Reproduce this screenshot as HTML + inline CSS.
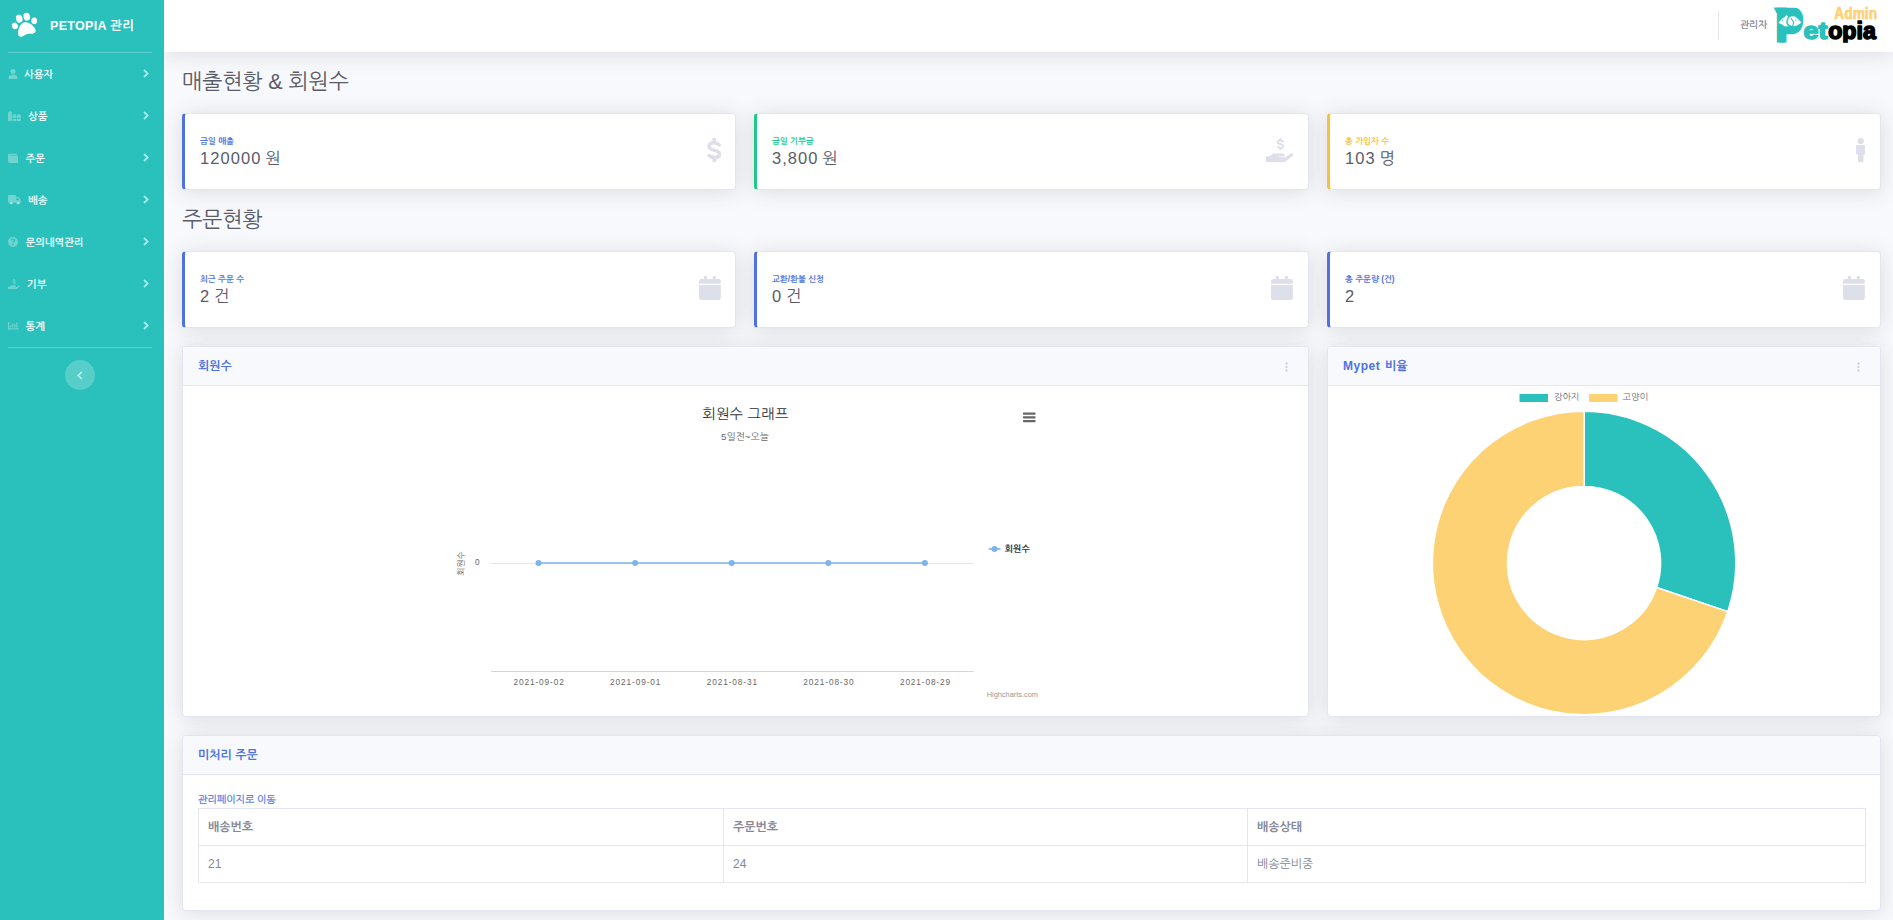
<!DOCTYPE html>
<html lang="ko">
<head>
<meta charset="utf-8">
<title>PETOPIA 관리</title>
<style>
*{box-sizing:border-box;margin:0;padding:0}
html,body{width:1893px;height:920px;overflow:hidden}
body{background:#f8f9fc;font-family:"Liberation Sans","NanumGothic",sans-serif;color:#858796;position:relative;font-size:12px}
a{text-decoration:none;color:#4e73df}
.abs{position:absolute}
/* sidebar */
#sidebar{z-index:5;position:absolute;left:0;top:0;width:164px;height:920px;background:#2ac1bc;color:#fff}
#sidebar .brand{position:absolute;left:50px;top:16.500px;font-size:12.5px;font-weight:700;letter-spacing:.3px;line-height:18px;white-space:nowrap}
#sidebar hr{position:absolute;left:8px;width:144px;height:1px;border:0;background:rgba(255,255,255,.22)}
.nav{position:absolute;left:0;width:164px;height:42px}
.nav .ic{position:absolute;left:8px;top:16px;width:10px;height:10px;fill:rgba(255,255,255,.32)}
.nav span{position:absolute;top:12.700px;font-size:10.400px;letter-spacing:-.1px;font-weight:700;line-height:18px;color:rgba(255,255,255,.92);white-space:nowrap}
.nav .chev{position:absolute;left:143px;top:16px;width:6px;height:9px;fill:none;stroke:rgba(255,255,255,.6);stroke-width:1.900}
#toggle{position:absolute;left:65px;top:360px;width:30px;height:30px;border-radius:50%;background:rgba(255,255,255,.22)}
/* topbar */
#topbar{position:absolute;left:164px;top:0;width:1729px;height:52px;background:#fff;box-shadow:0 2px 21px 0 rgba(58,59,69,.15)}
#topbar .vdiv{position:absolute;left:1554px;top:11px;width:1px;height:29px;background:#e3e6f0}
#topbar .uname{position:absolute;left:1576px;top:17px;font-size:9.6px;line-height:16px;color:#74768a;-webkit-text-stroke:.2px #74768a;white-space:nowrap}
/* headings */
h1{position:absolute;left:182px;font-size:21.600px;font-weight:400;color:#5a5c69;line-height:26px;white-space:nowrap;letter-spacing:-.2px}
/* stat cards */
.stat{position:absolute;width:554px;height:77px;background:#fff;border:1px solid #e3e6f0;border-left:3px solid #4e73df;border-radius:4px;box-shadow:0 2px 21px 0 rgba(58,59,69,.15)}
.stat .lb{position:absolute;left:15px;top:21px;font-size:8.4px;font-weight:700;line-height:11px;color:#4e73df;white-space:nowrap}
.stat .val{position:absolute;left:15px;top:33.500px;word-spacing:-1.800px;font-size:16.5px;line-height:20px;color:#5a5c69;white-space:nowrap;letter-spacing:1.050px}
.stat svg{position:absolute;fill:#dddfeb}
.r1 .lb{top:22px}.r1 .val{top:33.800px}.r1 svg{margin-top:1px}
/* cards */
.card{position:absolute;background:#fff;border:1px solid #e3e6f0;border-radius:4px;box-shadow:0 2px 21px 0 rgba(58,59,69,.15)}
.card .hd{position:absolute;left:0;top:0;right:0;height:39px;background:#f8f9fc;border-bottom:1px solid #e3e6f0;border-radius:3px 3px 0 0}
.card .hd b{position:absolute;left:15px;top:11px;font-size:12px;line-height:16px;color:#4e73df;white-space:nowrap}
.card .hd .dots{position:absolute;right:20px;top:14.500px;width:3px;height:10px;fill:#d1d3e2}
table{position:absolute;left:15px;top:72px;border-collapse:collapse;table-layout:fixed;width:1667px;font-size:12px;color:#858796}
td,th{border:1px solid #e3e6f0;height:37px;padding:0 9px;text-align:left;vertical-align:middle}
</style>
</head>
<body>

<!-- SIDEBAR -->
<div id="sidebar">
  <svg class="abs" style="left:9.500px;top:9.500px;width:30px;height:30px" viewBox="0 0 27 27"><g transform="rotate(-15 13.5 13.5)" fill="#fff">
    <ellipse cx="10" cy="6.700" rx="2.900" ry="3.600"/><ellipse cx="17" cy="6.700" rx="2.900" ry="3.600"/>
    <ellipse cx="4.500" cy="12" rx="2.600" ry="3" transform="rotate(-15 4.500 12)"/><ellipse cx="22.500" cy="12" rx="2.600" ry="3" transform="rotate(15 22.500 12)"/>
    <path transform="translate(13.500 17) scale(1.090) translate(-13.500 -17)" d="M13.500 11.500c3.600 0 7.400 5.200 7.400 8.600 0 1.600-1.200 2.300-2.600 2.300-1.700 0-3-.9-4.800-.9s-3.100.9-4.800.9c-1.400 0-2.600-.7-2.600-2.300 0-3.400 3.800-8.600 7.400-8.600z"/>
  </g></svg>
  <div class="brand">PETOPIA 관리</div>
  <hr style="top:52px">
  <div class="nav" style="top:53px"><svg class="ic" viewBox="0 0 10 10"><circle cx="5" cy="2.6" r="2.5"/><path d="M0.600 10v-1.600c0-1.700 1.300-2.700 2.900-2.700h3c1.600 0 2.900 1 2.900 2.700v1.600z"/></svg><span style="left:24px">사용자</span><svg class="chev" viewBox="0 0 6 9"><path d="M1 1l3.600 3.500-3.600 3.500"/></svg></div>
  <div class="nav" style="top:95px"><svg class="ic" style="width:13px;height:10.300px;top:16px" viewBox="0 0 13 10.300"><path d="M0 10.300V2.600a2 2.300 0 0 1 4 0V10.300Z"/><path d="M4.600 6.800V4.600L6 3.200h1.200L8.500 4.600V6.800ZM9 6.800V4.600L10.300 3.200h1.200L12.900 4.600V6.800ZM4.600 7.700H8.500V10.300H4.600ZM9 7.700H12.900V10.300H9Z"/></svg><span style="left:28px">상품</span><svg class="chev" viewBox="0 0 6 9"><path d="M1 1l3.600 3.500-3.600 3.500"/></svg></div>
  <div class="nav" style="top:137px"><svg class="ic" viewBox="0 0 10 10"><path d="M0 2c0-.8.600-1.300 1.400-1.300h7.600v1.300h-7.600v.600h7.600c.6 0 1 .4 1 1v5.400c0 .6-.4 1-1 1h-7.600c-.8 0-1.400-.6-1.400-1.400z"/></svg><span style="left:25.500px">주문</span><svg class="chev" viewBox="0 0 6 9"><path d="M1 1l3.600 3.500-3.600 3.500"/></svg></div>
  <div class="nav" style="top:179px"><svg class="ic" style="width:13px" viewBox="0 0 13 10"><path d="M0 1c0-.5.400-.9.900-.9h6.400c.5 0 .9.400.9.900v1h1.700c.4 0 .7.200.9.500l1.700 2.100c.2.200.3.500.3.800v2.300h-.7a1.900 1.900 0 0 1-3.800 0h-3.200a1.900 1.900 0 0 1-3.800 0h-.400c-.5 0-.9-.4-.9-.9zM8.200 3.200v2.100h3.200l-1.500-2.100z"/><circle cx="3.200" cy="7.900" r="1.200"/><circle cx="10.200" cy="7.900" r="1.200"/></svg><span style="left:28px">배송</span><svg class="chev" viewBox="0 0 6 9"><path d="M1 1l3.600 3.500-3.600 3.500"/></svg></div>
  <div class="nav" style="top:221px"><svg class="ic" viewBox="0 0 10 10"><path fill-rule="evenodd" d="M5 0a5 5 0 1 0 0 10a5 5 0 0 0 0-10zM5 8.300a.8.800 0 1 1 0-1.600a.8.800 0 0 1 0 1.600zM5.700 5.800h-1.400c0-1.700 1.500-1.600 1.500-2.500c0-.4-.3-.7-.8-.7s-.9.300-1 .8l-1.300-.3c.2-1.100 1.100-1.700 2.300-1.700c1.300 0 2.300.7 2.300 1.900c0 1.500-1.600 1.500-1.600 2.500z"/></svg><span style="left:25.500px">문의내역관리</span><svg class="chev" viewBox="0 0 6 9"><path d="M1 1l3.600 3.500-3.600 3.500"/></svg></div>
  <div class="nav" style="top:263px"><svg class="ic" style="width:11.800px;height:10.300px;top:16px" viewBox="0 0 27.500 24"><rect x="13.400" y="0" width="1.900" height="2.400"/><rect x="13.400" y="9.700" width="1.900" height="2.400"/><path d="M17.100 3.700C16.300 2.900 15.400 2.500 14.300 2.500C12.700 2.500 11.700 3.300 11.700 4.300C11.700 5.400 12.600 5.800 14.400 6.200C16.300 6.700 17.200 7.100 17.200 8.200C17.200 9.300 16.100 9.900 14.600 9.900C13.500 9.900 12.500 9.600 11.700 8.900" fill="none" stroke="rgba(255,255,255,.32)" stroke-width="2.200" stroke-linecap="round"/><path d="M0 18.200H3.800L7.100 15.400H17.200A1.500 1.500 0 0 1 17.200 18.400H12.800V19.300H19.800L24.700 15.600C25.400 15.100 26.400 15.200 26.900 15.800C27.400 16.500 27.300 17.400 26.600 17.900L19.500 23.600C19.200 23.900 18.800 24 18.400 24H0Z"/></svg><span style="left:27px">기부</span><svg class="chev" viewBox="0 0 6 9"><path d="M1 1l3.600 3.500-3.600 3.500"/></svg></div>
  <div class="nav" style="top:305px"><svg class="ic" style="width:10.700px;height:7.600px;top:17.400px" viewBox="0 0 10.700 7.600"><path d="M0 0h1.300v6.300h9.400v1.300H0z"/><rect x="2.300" y="3.200" width="1.100" height="2.400"/><rect x="4.300" y="1.300" width="1.200" height="4.300"/><rect x="6.300" y="2.400" width="1.200" height="3.200"/><rect x="8.300" y=".2" width="1.200" height="5.400"/></svg><span style="left:25.500px">통계</span><svg class="chev" viewBox="0 0 6 9"><path d="M1 1l3.600 3.500-3.600 3.500"/></svg></div>
  <hr style="top:347px">
  <div id="toggle"><svg class="abs" style="left:12px;top:11px;width:6px;height:9px" viewBox="0 0 6 9"><path d="M4.800 1l-3.600 3.500 3.600 3.500" fill="none" stroke="rgba(255,255,255,.65)" stroke-width="1.700"/></svg></div>
</div>

<!-- TOPBAR -->
<div id="topbar">
  <div class="vdiv"></div>
  <div class="uname">관리자</div>
  <svg class="abs" id="logo" style="left:1606px;top:0;width:112px;height:50px" viewBox="0 0 1893 845">
    <defs><clipPath id="oc"><rect x="900" y="300" width="1000" height="422"/></clipPath><clipPath id="pc"><rect x="0" y="129" width="700" height="591"/></clipPath></defs>
    <g clip-path="url(#pc)"><text transform="translate(101 743.500) scale(.808 1)" font-family="Liberation Sans,sans-serif" font-weight="700" font-size="835" fill="#2ac1bc" stroke="#2ac1bc" stroke-width="78">P</text></g>
    <rect x="250" y="270" width="190" height="180" fill="#2ac1bc"/>
    <path d="M66 132L280 132L125 238Z" fill="#2ac1bc" stroke="#2ac1bc" stroke-width="6" stroke-linejoin="round"/>
    <g transform="translate(67.600 169) scale(.3674)"><path d="M225 560L380 400L500 330L575 240L640 300C600 380 560 470 555 560C555 620 590 690 640 745L470 740L380 660L250 610Z" fill="#fff" stroke="#fff" stroke-width="20" stroke-linejoin="round"/><path d="M1250 570C1150 480 1080 380 1000 330C930 285 790 285 720 350C660 420 630 500 650 590C665 660 710 695 760 690L850 735L1000 720C1090 690 1180 620 1250 570Z" fill="#fff" stroke="#fff" stroke-width="20" stroke-linejoin="round"/><path d="M800 385C800 470 905 500 905 580C905 650 860 690 845 760" fill="none" stroke="#2ac1bc" stroke-width="48" stroke-linecap="round"/><circle cx="395" cy="465" r="32" fill="#2ac1bc"/><circle cx="1000" cy="465" r="32" fill="#2ac1bc"/></g>
    <text x="566" y="655" font-family="Liberation Sans,sans-serif" font-weight="700" font-size="395" fill="#2ac1bc" stroke="#2ac1bc" stroke-width="26" stroke-linejoin="round" textLength="405" lengthAdjust="spacingAndGlyphs">et</text>
    <g clip-path="url(#oc)"><text x="984" y="653" font-family="Liberation Sans,sans-serif" font-weight="700" font-size="392" fill="#000" stroke="#000" stroke-width="27" stroke-linejoin="round" textLength="806" lengthAdjust="spacingAndGlyphs">opia</text></g>
    <text x="1088" y="313" font-family="Liberation Sans,sans-serif" font-weight="700" font-size="266" fill="#fdd275" stroke="#fdd275" stroke-width="12" textLength="722" lengthAdjust="spacingAndGlyphs">Admin</text>
  </svg>
</div>

<!-- HEADINGS -->
<h1 style="top:68.500px">매출현황 &amp; 회원수</h1>
<h1 style="top:206.500px">주문현황</h1>

<!-- STAT CARDS ROW 1 -->
<div class="stat r1" style="left:182px;top:113px"><div class="lb">금일 매출</div><div class="val">120000 원</div><svg style="right:14px;top:23px;width:14.500px;height:24px" viewBox="0 0 14.500 24"><rect x="5.400" y="0" width="3.700" height="4.500"/><rect x="5.400" y="19.500" width="3.700" height="4.500"/><path d="M12.200 7C10.700 5.400 9 4.700 7 4.700C4 4.700 2 6.200 2 8.300C2 10.500 3.800 11.300 7.200 12.200C10.800 13.200 12.600 14 12.600 16.100C12.600 18.300 10.400 19.500 7.600 19.500C5.400 19.500 3.500 18.900 2.100 17.500" fill="none" stroke="#dddfeb" stroke-width="3.500" stroke-linecap="round"/></svg></div>
<div class="stat r1" style="left:754px;top:113px;width:555px;border-left-color:#1cc88a"><div class="lb" style="color:#1cc88a">금일 기부금</div><div class="val">3,800 원</div><svg style="right:15px;top:23px;width:27.500px;height:24px" viewBox="0 0 27.500 24"><rect x="13.400" y="0" width="1.900" height="2.400"/><rect x="13.400" y="9.700" width="1.900" height="2.400"/><path d="M17.100 3.700C16.300 2.900 15.400 2.500 14.300 2.500C12.700 2.500 11.700 3.300 11.700 4.300C11.700 5.400 12.600 5.800 14.400 6.200C16.300 6.700 17.200 7.100 17.200 8.200C17.200 9.300 16.100 9.900 14.600 9.900C13.500 9.900 12.500 9.600 11.700 8.900" fill="none" stroke="#dddfeb" stroke-width="1.900" stroke-linecap="round"/><path d="M0 18.200H3.800L7.100 15.400H17.200A1.500 1.500 0 0 1 17.200 18.400H12.800V19.300H19.800L24.700 15.600C25.400 15.100 26.400 15.200 26.900 15.800C27.400 16.500 27.300 17.400 26.600 17.900L19.500 23.600C19.200 23.900 18.800 24 18.400 24H0Z"/></svg></div>
<div class="stat r1" style="left:1327px;top:113px;border-left-color:#f6c23e"><div class="lb" style="color:#f6c23e">총 가입자 수</div><div class="val">103 명</div><svg style="right:15px;top:23px;width:9.400px;height:24px" viewBox="0 0 9.400 24"><circle cx="4.700" cy="3.100" r="3.100"/><path d="M1.300 7H8.100A1.300 1.300 0 0 1 9.400 8.300V15.600A1 1 0 0 1 8.400 16.600H7.400V23A1 1 0 0 1 6.400 24H3A1 1 0 0 1 2 23V16.600H1A1 1 0 0 1 0 15.600V8.300A1.300 1.300 0 0 1 1.300 7Z"/></svg></div>

<!-- STAT CARDS ROW 2 -->
<div class="stat r1" style="left:182px;top:251px"><div class="lb">최근 주문 수</div><div class="val">2 건</div><svg style="right:14px;top:23px;width:21.800px;height:24px" viewBox="0 0 21.800 24"><rect x="4.900" y="0" width="3" height="4"/><rect x="13.800" y="0" width="3" height="4"/><path d="M2 3H19.800A2 2 0 0 1 21.800 5V7.700H0V5A2 2 0 0 1 2 3Z"/><path d="M0 9H21.800V22A2 2 0 0 1 19.800 24H2A2 2 0 0 1 0 22Z"/></svg></div>
<div class="stat r1" style="left:754px;top:251px;width:555px"><div class="lb">교환/환불 신청</div><div class="val">0 건</div><svg style="right:15px;top:23px;width:21.800px;height:24px" viewBox="0 0 21.800 24"><rect x="4.900" y="0" width="3" height="4"/><rect x="13.800" y="0" width="3" height="4"/><path d="M2 3H19.800A2 2 0 0 1 21.800 5V7.700H0V5A2 2 0 0 1 2 3Z"/><path d="M0 9H21.800V22A2 2 0 0 1 19.800 24H2A2 2 0 0 1 0 22Z"/></svg></div>
<div class="stat r1" style="left:1327px;top:251px"><div class="lb">총 주문량 (건)</div><div class="val">2</div><svg style="right:15px;top:23px;width:21.800px;height:24px" viewBox="0 0 21.800 24"><rect x="4.900" y="0" width="3" height="4"/><rect x="13.800" y="0" width="3" height="4"/><path d="M2 3H19.800A2 2 0 0 1 21.800 5V7.700H0V5A2 2 0 0 1 2 3Z"/><path d="M0 9H21.800V22A2 2 0 0 1 19.800 24H2A2 2 0 0 1 0 22Z"/></svg></div>

<!-- LINE CHART CARD -->
<div class="card" id="c1" style="left:182px;top:346px;width:1127px;height:371px">
  <div class="hd"><b>회원수</b><svg class="dots" viewBox="0 0 3 10"><circle cx="1.500" cy="1.500" r="1.200"/><circle cx="1.500" cy="5" r="1.200"/><circle cx="1.500" cy="8.500" r="1.200"/></svg></div>
  <svg class="abs" style="left:0;top:1px;width:1124px;height:366px" viewBox="0 0 1124 366">
    <text x="562.4" y="71" text-anchor="middle" font-family="Liberation Sans,NanumGothic,sans-serif" font-size="14.300" letter-spacing=".25" fill="#333">회원수 그래프</text>
    <text x="562" y="92" text-anchor="middle" font-family="Liberation Sans,NanumGothic,sans-serif" font-size="9.800" fill="#666">5일전~오늘</text>
    <g fill="#666"><rect x="840" y="64.5" width="12.500" height="2.200" rx=".6"/><rect x="840" y="68.2" width="12.500" height="2.200" rx=".6"/><rect x="840" y="72" width="12.500" height="2.200" rx=".6"/></g>
    <path d="M308 215.5H790.5" stroke="#e6e6e6" stroke-width="1"/>
    <path d="M308 323.5H790.5" stroke="#ccd6eb" stroke-width="1"/>
    <path d="M355.5 215H741.9" stroke="#7cb5ec" stroke-width="1.600"/>
    <circle cx="355.5" cy="215" r="3" fill="#7cb5ec"/>
    <circle cx="452.1" cy="215" r="3" fill="#7cb5ec"/>
    <circle cx="548.7" cy="215" r="3" fill="#7cb5ec"/>
    <circle cx="645.3" cy="215" r="3" fill="#7cb5ec"/>
    <circle cx="741.9" cy="215" r="3" fill="#7cb5ec"/>
    <text x="356.10" y="336.800" text-anchor="middle" font-family="Liberation Sans,NanumGothic,sans-serif" font-size="8.250" fill="#666" letter-spacing=".9">2021-09-02</text>
    <text x="452.70" y="336.800" text-anchor="middle" font-family="Liberation Sans,NanumGothic,sans-serif" font-size="8.250" fill="#666" letter-spacing=".9">2021-09-01</text>
    <text x="549.30" y="336.800" text-anchor="middle" font-family="Liberation Sans,NanumGothic,sans-serif" font-size="8.250" fill="#666" letter-spacing=".9">2021-08-31</text>
    <text x="645.90" y="336.800" text-anchor="middle" font-family="Liberation Sans,NanumGothic,sans-serif" font-size="8.250" fill="#666" letter-spacing=".9">2021-08-30</text>
    <text x="742.50" y="336.800" text-anchor="middle" font-family="Liberation Sans,NanumGothic,sans-serif" font-size="8.250" fill="#666" letter-spacing=".9">2021-08-29</text>
    <text x="296.5" y="217" text-anchor="end" font-family="Liberation Sans,NanumGothic,sans-serif" font-size="8.250" fill="#666">0</text>
    <text transform="translate(281 215.5) rotate(-90)" text-anchor="middle" font-family="Liberation Sans,NanumGothic,sans-serif" font-size="8.600" fill="#666">회원수</text>
    <path d="M805.7 201H817.5" stroke="#7cb5ec" stroke-width="1.600"/><circle cx="811.5" cy="201" r="3" fill="#7cb5ec"/>
    <text x="821.5" y="204.3" font-family="Liberation Sans,NanumGothic,sans-serif" font-size="9" font-weight="700" fill="#333">회원수</text>
    <text x="855" y="348.7" text-anchor="end" font-family="Liberation Sans,NanumGothic,sans-serif" font-size="7.400" fill="#999">Highcharts.com</text>
  </svg>
</div>

<!-- PIE CARD -->
<div class="card" id="c2" style="left:1327px;top:346px;width:554px;height:371px">
  <div class="hd"><b style="word-spacing:1.500px"><span style="letter-spacing:.5px">Mypet</span> 비율</b><svg class="dots" viewBox="0 0 3 10"><circle cx="1.500" cy="1.500" r="1.200"/><circle cx="1.500" cy="5" r="1.200"/><circle cx="1.500" cy="8.500" r="1.200"/></svg></div>
  <svg class="abs" style="left:-1px;top:1px;width:552px;height:366px;overflow:visible" viewBox="0 0 552 366">
    <rect x="192.500" y="46" width="28.500" height="8" fill="#2ac1bc"/><text x="227" y="52.200" font-family="Liberation Sans,NanumGothic,sans-serif" font-size="9" fill="#666">강아지</text>
    <rect x="262" y="46" width="28.500" height="8" fill="#fdd275"/><text x="295.500" y="52.200" font-family="Liberation Sans,NanumGothic,sans-serif" font-size="9" fill="#666">고양이</text>
    <path d="M257.10 63.30A151.7 151.7 0 0 1 400.79 263.64L329.56 239.53A76.5 76.5 0 0 0 257.10 138.50Z" fill="#2ac1bc" stroke="#fff" stroke-width="1.5" stroke-linejoin="round"/>
    <path d="M400.79 263.64A151.7 151.7 0 1 1 257.10 63.30L257.10 138.50A76.5 76.5 0 1 0 329.56 239.53Z" fill="#fdd275" stroke="#fff" stroke-width="1.5" stroke-linejoin="round"/>
  </svg>
</div>

<!-- TABLE CARD -->
<div class="card" id="c3" style="left:182px;top:735px;width:1699px;height:176px">
  <div class="hd"><b>미처리 주문</b></div>
  <a class="abs" style="left:15px;top:56.600px;font-size:10.200px;line-height:14px;white-space:nowrap;letter-spacing:-.2px;-webkit-text-stroke:.2px #4e73df" href="#">관리페이지로 이동</a>
  <table>
    <colgroup><col style="width:525px"><col style="width:524px"><col style="width:618px"></colgroup>
    <tr><th>배송번호</th><th>주문번호</th><th>배송상태</th></tr>
    <tr><td>21</td><td>24</td><td>배송준비중</td></tr>
  </table>
</div>

</body>
</html>
